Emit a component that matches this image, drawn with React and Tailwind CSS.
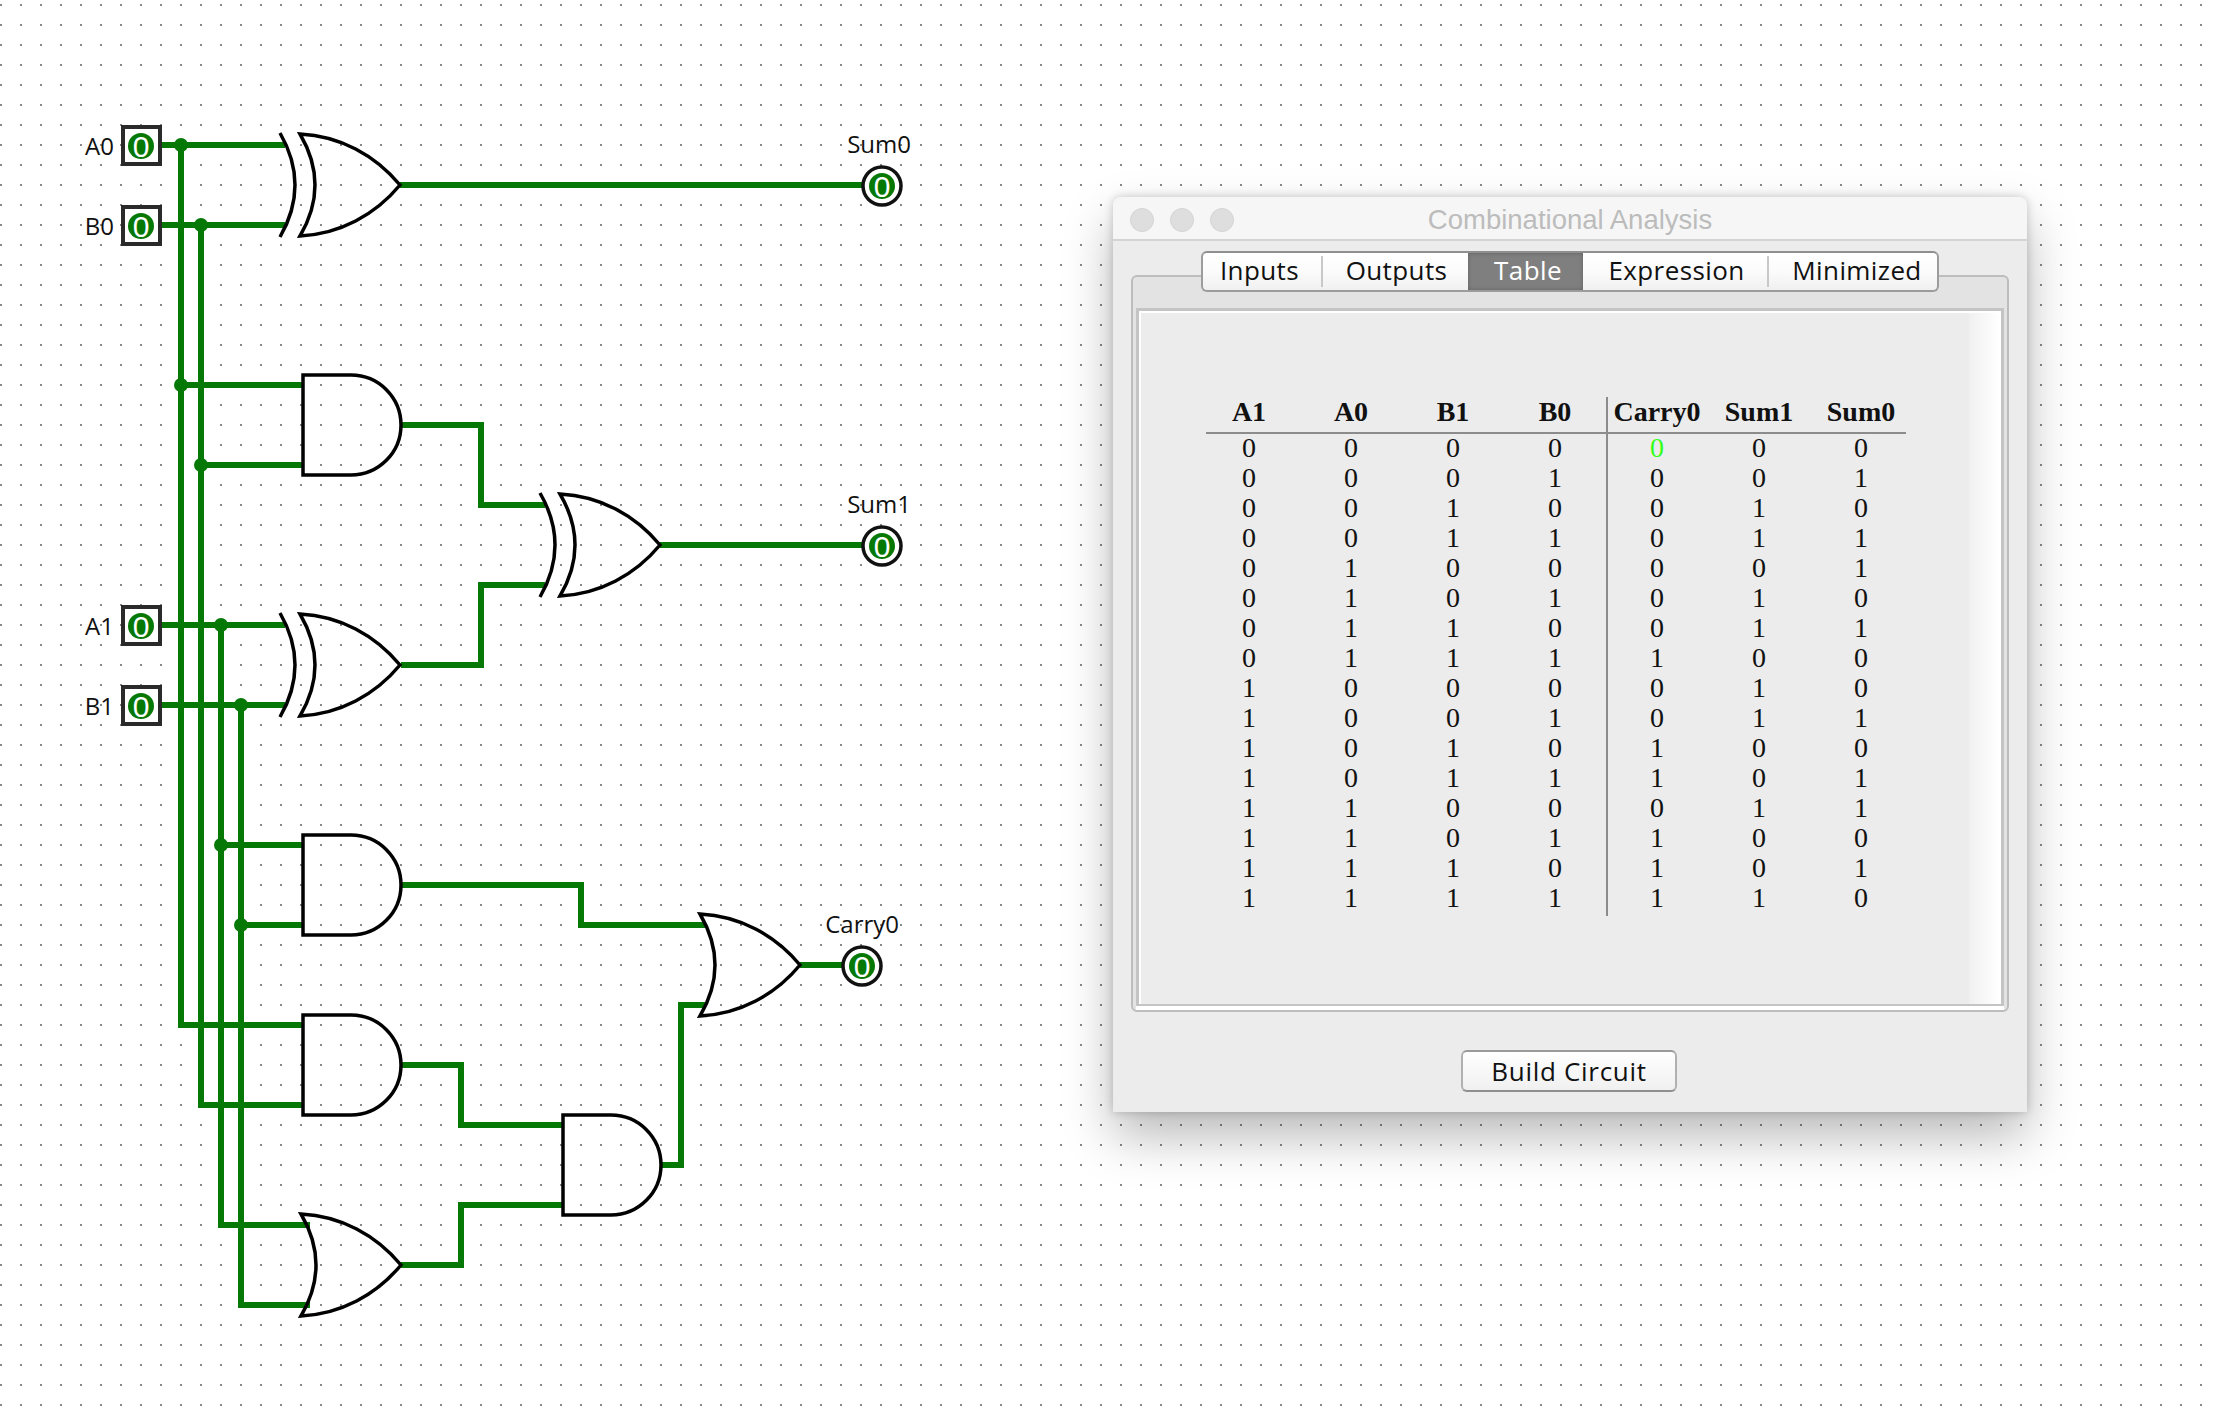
import React from "react";

const wires = [
  "M161 145H285", "M161 225H285", "M161 625H285", "M161 705H285",
  "M181 145V1025H303", "M181 385H303",
  "M201 225V1105H303", "M201 465H303",
  "M221 625V1225H310", "M221 845H303",
  "M241 705V1305H310", "M241 925H303",
  "M400 185H865",
  "M401 425H481V505H545", "M401 665H481V585H545", "M660 545H865",
  "M401 885H581V925H705", "M661 1165H681V1005H705", "M800 965H845",
  "M401 1065H461V1125H563", "M401 1265H461V1205H563",
];
const dots = [
  [181, 145], [201, 225], [181, 385], [201, 465],
  [221, 625], [241, 705], [221, 845], [241, 925],
];
const inputs = [
  ["A0", 145], ["B0", 225], ["A1", 625], ["B1", 705],
];
const outputs = [
  ["Sum0", 882, 186, 911, 145],
  ["Sum1", 882, 546, 911, 505],
  ["Carry0", 862, 966, 899, 925],
];

const orPath = (tx, cy) =>
  `M${tx - 100} ${cy - 51}C${tx - 60} ${cy - 49} ${tx - 25} ${cy - 30} ${tx} ${cy}C${tx - 25} ${cy + 30} ${tx - 60} ${cy + 49} ${tx - 100} ${cy + 51}Q${tx - 70} ${cy} ${tx - 100} ${cy - 51}Z`;
const xorArc = (tx, cy) => `M${tx - 120} ${cy - 52}Q${tx - 90} ${cy} ${tx - 120} ${cy + 52}`;
const andPath = (tx, cy) =>
  `M${tx - 50} ${cy - 50}H${tx - 98}V${cy + 50}H${tx - 50}A50 50 0 0 0 ${tx - 50} ${cy - 50}Z`;

const Value = ({ x, y }) => (
  <g>
    <circle cx={x} cy={y} r="13" fill="#067806" />
    <text x={x} y={y + 11} textAnchor="middle" fill="#fff" className="font-['Liberation_Sans'] text-[30px]">0</text>
  </g>
);

const Circuit = () => (
  <svg width="1000" height="1412" className="absolute left-0 top-0">
    <g fill="none" stroke="#067806" strokeWidth="6">
      {wires.map((d) => <path key={d} d={d} />)}
    </g>
    {dots.map(([x, y]) => <circle key={`${x}-${y}`} cx={x} cy={y} r="7" fill="#067806" />)}
    <g fill="none" stroke="#000" strokeWidth="3.5">
      {[[400, 185], [660, 545], [400, 665]].map(([x, y]) => (
        <g key={`x${y}`}>
          <path d={xorArc(x, y)} />
          <path d={orPath(x, y)} />
        </g>
      ))}
      {[[800, 965], [401, 1265]].map(([x, y]) => <path key={`o${y}`} d={orPath(x, y)} />)}
      {[[401, 425], [401, 885], [401, 1065], [661, 1165]].map(([x, y]) => <path key={`a${y}`} d={andPath(x, y)} />)}
    </g>
    {inputs.map(([name, y]) => (
      <g key={name}>
        <rect x="123" y={y - 18} width="37" height="37" fill="#fff" stroke="#2a2a2a" strokeWidth="4" />
        <Value x={141} y={y + 1} />
        <text x="114" y={y + 10} textAnchor="end" fill="#111" className="font-['Open_Sans'] text-[24px]">{name}</text>
      </g>
    ))}
    {outputs.map(([name, x, y, lx, ly]) => (
      <g key={name}>
        <circle cx={x} cy={y} r="19" fill="#fff" stroke="#111" strokeWidth="3.5" />
        <Value x={x} y={y} />
        <text x={lx} y={ly + 8} textAnchor="end" fill="#111" className="font-['Open_Sans'] text-[24px]">{name}</text>
      </g>
    ))}
  </svg>
);

const columns = ["A1", "A0", "B1", "B0", "Carry0", "Sum1", "Sum0"];
const rows = [
  "0000000", "0001001", "0010010", "0011011",
  "0100001", "0101010", "0110011", "0111100",
  "1000010", "1001011", "1010100", "1011101",
  "1100011", "1101100", "1110101", "1111110",
];

const TruthTable = () => (
  <div className="relative w-[714px] font-['Liberation_Serif',serif] text-[28px] leading-[30px] text-[#111]">
    <div className="grid grid-cols-[repeat(7,102px)] h-[35px] font-bold">
      {columns.map((c) => <div key={c} className="text-center">{c}</div>)}
    </div>
    <div className="ml-[8px] w-[700px] h-[2px] -mb-[1px] bg-[#8c8c8c]" />
    {rows.map((row, i) => (
      <div key={i} className="grid grid-cols-[repeat(7,102px)] h-[30px]">
        {row.split("").map((v, j) => (
          <div key={j} className={i === 0 && j === 4 ? "text-center text-[#33ff1a]" : "text-center"}>{v}</div>
        ))}
      </div>
    ))}
    <div className="absolute left-[408px] top-0 h-[519px] w-[2px] bg-[#8c8c8c]" />
  </div>
);

const tabs = [
  { label: "Inputs", w: "w-[118px] pr-[5px]" },
  { label: "Outputs", w: "w-[147px] pl-[2px]", border: true },
  { label: "Table", w: "w-[115px] pl-[5px]", active: true },
  { label: "Expression", w: "w-[184px] pl-[3px]" },
  { label: "Minimized", w: "w-[170px] pl-[8px]", border: true },
];

const Tabs = () => (
  <div className="absolute left-[88px] top-[10px] flex h-[41px] w-[738px] rounded-md border-2 border-[#9c9c9c] border-t-[#8f8f8f] bg-gradient-to-b from-white via-[#fbfbfb] to-[#f0f0f0] overflow-hidden font-['Open_Sans',sans-serif] text-[26px] tracking-[0.4px]">
    {tabs.map((t) => (
      <div
        key={t.label}
        className={`flex items-center justify-center pb-[2px] ${t.w} ${t.active ? "bg-[#7f7f7f] text-white shadow-[inset_0_0_4px_rgba(0,0,0,0.25)]" : "text-[#111]"} ${t.border ? "border-l-2 border-l-[#c8c8c8] my-[3px] h-[31px]" : ""}`}
      >
        {t.label}
      </div>
    ))}
  </div>
);

const ComboWindow = () => (
  <div className="absolute left-[1113px] top-[197px] flex h-[915px] w-[914px] flex-col rounded-t-lg bg-[#ececec] shadow-[0_24px_50px_rgba(0,0,0,0.28),0_0_10px_rgba(0,0,0,0.2)]">
    <div className="relative flex h-[44px] items-center justify-center rounded-t-lg border-b-2 border-[#d4d4d4] bg-[#f6f6f6] pt-[4px]">
      <div className="absolute left-[17px] top-[11px] flex gap-4">
        <span className="h-6 w-6 rounded-full border border-[#d4d4d4] bg-[#dedede]" />
        <span className="h-6 w-6 rounded-full border border-[#d4d4d4] bg-[#dedede]" />
        <span className="h-6 w-6 rounded-full border border-[#d4d4d4] bg-[#dedede]" />
      </div>
      <span className="font-['Liberation_Sans',sans-serif] text-[27.5px] text-[#bcbcbc]">Combinational Analysis</span>
    </div>
    <div className="relative flex-1 px-[18px] pt-[34px]">
      <Tabs />
      <div className="h-[737px] rounded-md border-2 border-[#bdbdbd] bg-[#e3e3e3] px-[3px] pt-[31px]">
        <div className="h-full border-b-4 border-white">
          <div className="flex h-full border-[3px] border-[#c4c4c4] border-b-[2px]">
            <div className="flex flex-1 border-2 border-white border-b-0 bg-[#ececec]">
              <div className="flex-1 pl-[57px] pt-[84px]">
                <TruthTable />
              </div>
              <div className="w-[30px] bg-gradient-to-r from-[#f0f0f0] to-white" />
            </div>
          </div>
        </div>
      </div>
      <div className="flex justify-center pt-[38px]">
        <button className="mr-[2px] h-[42px] w-[216px] rounded-md border-2 border-[#b0b0b0] border-t-[#9a9a9a] border-b-[#8f8f8f] bg-gradient-to-b from-white to-[#f0f0f0] pb-[2px] font-['Open_Sans',sans-serif] text-[26px] tracking-[0.7px] text-[#111]">
          Build Circuit
        </button>
      </div>
    </div>
  </div>
);

const App = () => (
  <div className="relative h-[1412px] w-[2216px] overflow-hidden bg-white bg-[radial-gradient(circle,#888888_1.2px,transparent_1.2px)] bg-[size:20px_20px] bg-[position:11px_15px]">
    <Circuit />
    <ComboWindow />
  </div>
);

export default App;
